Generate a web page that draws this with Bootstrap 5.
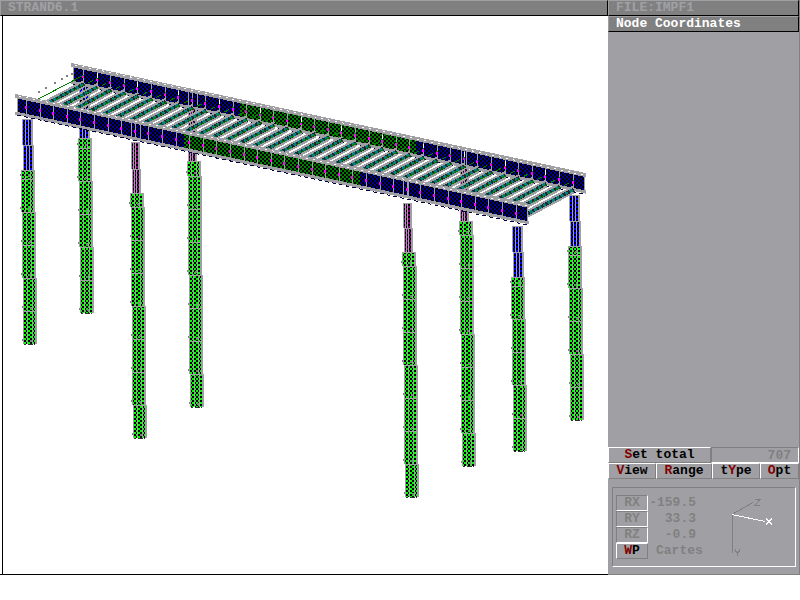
<!DOCTYPE html>
<html lang="en">
<head>
<meta charset="utf-8">
<meta name="viewport" content="width=device-width, initial-scale=1">
<title>STRAND6.1</title>
<link href="https://cdn.jsdelivr.net/npm/bootstrap@5.3.0/dist/css/bootstrap.min.css" rel="stylesheet">
<style>
body{background:#fff;font:bold 13px/14px "Liberation Mono","DejaVu Sans Mono",monospace;color:#000}
.shell{min-height:100vh;padding-bottom:25px}
.bar{background:#808080;color:#a0a0a4;height:16px;padding-left:7px;border-top:1px solid #a0a0a4;border-left:1px solid #a0a0a4;border-bottom:1px solid #000;border-right:1px solid #000;white-space:pre}
.bar h1,.bar h2{font:inherit;margin:0}
.bar.active{color:#fff}
.work{border-bottom:1px solid #000}
.stage{margin-left:2px;border-left:1px solid #000;min-height:0;position:relative}
.side{width:192px;background:#a0a0a4;border-right:1px solid #808080;border-bottom:1px solid #808080}
.key{font:inherit;background:#a0a0a4;border:1px solid #808080;border-top:1px solid #fff;border-left-color:#fff;border-radius:0;padding:0;height:16px;line-height:14px;text-align:center;color:#000}
.key b{color:#800000}
.total{background:#a0a0a4;color:#808080;border:1px solid #808080;border-right-color:#fff;border-bottom-color:#fff;border-radius:0;font:inherit;text-align:right;padding:0 7px 0 0;height:16px;width:88px}
.menu{display:grid;grid-template-columns:48px 56px 48px 1fr}
.inset{margin:8px 3px 7px 4px;border:1px solid #808080;border-right-color:#fff;border-bottom-color:#fff;padding:7px 3px;color:#808080;line-height:16px}
.axis{width:32px;border:1px solid #808080;border-right-color:#fff;border-bottom-color:#fff;color:#808080}
.axis.on{border-color:#fff #808080 #808080 #fff;color:#000}
.reading{width:48px;text-align:right}
.triad{width:60px;height:64px;margin-right:14px}
</style>
<script src="https://cdn.jsdelivr.net/npm/bootstrap@5.3.0/dist/js/bootstrap.bundle.min.js"></script>
</head>
<body>
<div class="shell d-flex">
  <main class="work flex-grow-1 d-flex flex-column">
    <header class="bar"><h1>STRAND6.1</h1></header>
    <div class="stage flex-grow-1">
      <svg id="model" class="d-block w-100 h-100 position-absolute" viewBox="3 16 605 558" preserveAspectRatio="xMinYMin meet" shape-rendering="crispEdges" role="img" aria-label="Bridge model">
        <defs>
          <pattern id="navy" width="4" height="4" patternUnits="userSpaceOnUse"><path fill="#000088" d="M0 0h4v4H0z"/><path d="M0 0h2v2H0zM2 2h2v2H2z"/></pattern>
          <pattern id="green" width="4" height="4" patternUnits="userSpaceOnUse"><path fill="#008000" d="M0 0h4v4H0z"/><path d="M0 0h2v2H0zM2 2h2v2H2z"/></pattern>
          <pattern id="lime" width="4" height="4" patternUnits="userSpaceOnUse"><path fill="#00ff00" d="M0 0h4v4H0z"/><path d="M0 0h2v2H0zM2 2h2v2H2z"/></pattern>
          <pattern id="blue" width="4" height="4" patternUnits="userSpaceOnUse"><path fill="#0000ff" d="M0 0h4v4H0z"/><path d="M0 0h2v2H0zM2 2h2v2H2z"/></pattern>
          <pattern id="plum" width="4" height="4" patternUnits="userSpaceOnUse"><path fill="#800080" d="M0 0h4v4H0z"/><path d="M0 0h2v2H0zM2 2h2v2H2z"/></pattern>
        </defs>
      </svg>
    </div>
  </main>
  <aside class="side d-flex flex-column flex-shrink-0">
    <div class="bar">FILE:IMPF1</div>
    <div class="bar active"><h2>Node Coordinates</h2></div>
    <div class="mt-auto">
      <div class="d-flex"><button class="key flex-grow-1" type="button"><b>S</b>et total</button><input class="total" aria-label="Set total" value="707" readonly></div>
      <nav class="menu" aria-label="Options">
        <button class="key" type="button"><b>V</b>iew</button><button class="key" type="button"><b>R</b>ange</button><button class="key" type="button">t<b>Y</b>pe</button><button class="key" type="button"><b>O</b>pt</button>
      </nav>
      <div class="inset d-flex">
        <div>
          <div class="d-flex"><button class="key axis" type="button">RX</button><span class="reading">-159.5</span></div>
          <div class="d-flex"><button class="key axis" type="button">RY</button><span class="reading">33.3</span></div>
          <div class="d-flex"><button class="key axis" type="button">RZ</button><span class="reading">-0.9</span></div>
          <div class="d-flex"><button class="key axis on" type="button"><b>W</b>P</button><span class="ps-2">Cartes</span></div>
        </div>
        <svg class="triad ms-auto" viewBox="718 495 60 64" shape-rendering="crispEdges" fill="none" stroke="#808080" role="img" aria-label="Axes X, Y, Z">
          <path d="M732.5 514v39M732 514.500l21-12M755 499.500h5l-5 6h5M735.500 549v2l2 2 2-2v-2M737.500 553v3"/>
          <path stroke="#fff" d="M732 514.500l33 7M766.500 518v1l5 5v1M771.500 518v1l-5 5v1"/>
        </svg>
      </div>
    </div>
  </aside>
</div>
<script>
const svg = document.getElementById('model');
const put = (tag, attrs) => {
  const el = document.createElementNS('http://www.w3.org/2000/svg', tag);
  for (const k in attrs) el.setAttribute(k, attrs[k]);
  svg.appendChild(el);
};
const line = (x1, y1, x2, y2, stroke, w = 1, dash = 'none') =>
  put('path', {d: `M${x1} ${y1}L${x2} ${y2}`, stroke, 'stroke-width': w, 'stroke-dasharray': dash, fill: 'none'});
const GREY = '#a0a0a4', SLOPE = 0.2155, STEP = 13.6;

// Plate girder: shaded web in three parts, flanges, stiffeners and nodes.
function girder(x0, y0, x1, depth, g0, g1, firstRib, ribs, braces, tall) {
  const y = x => y0 + (x - x0) * SLOPE;
  [[x0, g0, 'navy'], [g0, g1, 'green'], [g1, x1, 'navy']].forEach(([a, b, fill]) =>
    put('path', {d: `M${a} ${y(a)}L${b} ${y(b)}V${y(b) + depth}L${a} ${y(a) + depth}Z`, fill: `url(#${fill})`}));
  line(x0 - 2, y(x0) - 1, x1 + 2, y(x1) - 1, GREY, 4);
  line(x0 + 2, y(x0) - 1, x1, y(x1) - 1, '#fff', 1, '2 5');
  line(x0 - 2, y(x0) + depth, x1 + 2, y(x1) + depth, GREY, 3);
  line(x0, y(x0) + depth + 2, x1, y(x1) + depth + 2, '#000040', 1, '4 3');
  line(x0 + 0.5, y(x0), x0 + 0.5, y(x0) + depth, GREY);
  line(x1 + 0.5, y(x1), x1 + 0.5, y(x1) + depth, GREY);
  for (let i = 0; i < ribs; i++) {
    const x = Math.round(firstRib + i * STEP) + 0.5;
    line(x, y(x), x, y(x) + depth, GREY);
    if (tall && i % 3 === 1) line(x, y(x) + 2, x, y(x) + 9, '#fff');
    put('rect', {x: x - 1.5, y: Math.round(y(x) + depth / 2 - 1), width: 2, height: 3, fill: '#ff00ff'});
  }
  braces.forEach(x => line(x + 0.5, y(x), x + 0.5, y(x) + depth, GREY));
}

// Pier: short upper casing, then shaft rings every 33 units down to the toe.
function pier(x, top, mid, shaft, toe, colour) {
  const joints = [];
  for (let j = toe; j > shaft + 6; j -= 33) joints.unshift(j);
  let a = shaft;
  const part = (l, w, t, b, fill) => {
    put('rect', {x: l, y: t, width: w, height: b - t, fill: GREY});
    put('rect', {x: l + 1, y: t, width: w - 3, height: b - t, fill: `url(#${fill})`});
    put('rect', {x: l + Math.floor(w * 0.4) - 1, y: t, width: 1, height: b - t, fill: GREY});
    put('rect', {x: l + w - 5, y: t, width: 1, height: b - t, fill: GREY});
    line(l, t + 0.5, l + w, t + 0.5, GREY);
  };
  const w = colour === 'plum' ? 9 : 11;
  part(x + 1, w, top, mid, colour);
  if (shaft > mid) part(x + 2, w, mid, shaft, colour);
  joints.forEach(j => {
    const l = x + Math.round((j - shaft) / 90);
    part(l, 14, a, j, 'lime');
    put('rect', {x: l - 1, y: j - 5, width: 1, height: 2, fill: '#808080'});
    put('rect', {x: l + 7, y: j - 4, width: 2, height: 2, fill: '#808080'});
    a = j;
  });
  const l = x + Math.round((toe - shaft) / 90);
  line(l + 1, toe + 0.5, l + 12, toe + 0.5, '#303030', 1, '2 2 5 1');
}

girder(73, 66, 584, 16, 240, 416, 83, 37, [188, 197, 461, 466], true);
pier(78, 86, 138, 138, 313, 'blue');
pier(187, 108, 161, 161, 407, 'plum');
pier(459, 168, 221, 221, 466, 'plum');
pier(568, 195, 221, 246, 420, 'blue');

// Cross beams between the girders.
for (let i = 0; i < 37; i++) {
  const x = 27 + i * STEP, y = 106 + i * STEP * SLOPE;
  const across = (d, c, w, dash) => line(x, y + d, x + 57, y - 30 + d, c, w, dash);
  if (i < 36) put('path', {d: `M${x + 12} ${y + 5}l38 -20v-3l-38 20z`, fill: '#fff'});
  across(8, '#202828', 5);
  across(8, '#008080', 3, '3 2');
  across(5, GREY, 2);
  across(11, GREY, 2);
  across(-1, '#008000', 1, i ? '5 4' : 'none');
  if (i) across(1, GREY, 1, '12 26');
}
[[38, 91], [45, 87], [54, 82], [61, 78], [66, 75], [71, 73]].forEach(([x, y]) =>
  put('rect', {x, y, width: 2, height: 2, fill: '#808080'}));

girder(17, 97, 527, 16, 184, 360, 26, 37, [131, 140, 403, 408], false);
pier(21, 119, 145, 170, 344, 'blue');
pier(130, 142, 169, 193, 438, 'plum');
pier(402, 203, 228, 252, 497, 'plum');
pier(511, 226, 252, 277, 451, 'blue');
</script>
</body>
</html>
